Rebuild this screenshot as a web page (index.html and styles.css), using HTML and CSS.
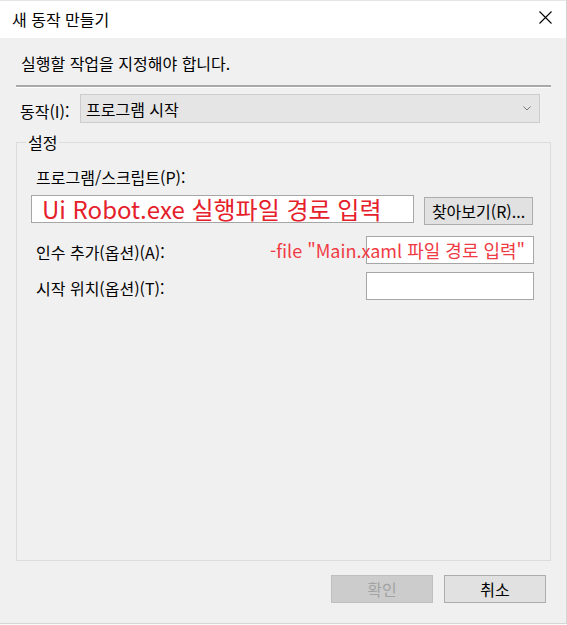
FILE: index.html
```html
<!DOCTYPE html>
<html lang="ko">
<head>
    <meta charset="UTF-8">
    <title>새 동작 만들기</title>
    <link rel="stylesheet" href="styles.css">
</head>
<body>
<div class="dialog">
    <div class="titlebar">
        <span class="title">새 동작 만들기</span>
        <svg class="close" width="13" height="13" viewBox="0 0 13 13">
            <path d="M0.5 0.5 L12.5 12.5 M12.5 0.5 L0.5 12.5" stroke="#000" stroke-width="1.1" fill="none"/>
        </svg>
    </div>
    <div class="content">
        <div class="intro">실행할 작업을 지정해야 합니다.</div>
        <div class="separator"></div>
        <div class="action-row">
            <span class="label">동작(I):</span>
            <div class="select">
                <span>프로그램 시작</span>
                <svg width="8" height="5" viewBox="0 0 8 5">
                    <path d="M0.5 0.5 L4 4 L7.5 0.5" stroke="#7a7a7a" stroke-width="1" fill="none"/>
                </svg>
            </div>
        </div>
        <fieldset class="settings">
            <legend>설정</legend>
            <div class="label indent">프로그램/스크립트(P):</div>
            <div class="program-row">
                <div class="textbox wide">Ui Robot.exe 실행파일 경로 입력</div>
                <button class="btn browse">찾아보기(R)...</button>
            </div>
            <div class="field-row args">
                <span class="label indent">인수 추가(옵션)(A):</span>
                <div class="textbox small"></div>
                <span class="note">-file "Main.xaml 파일 경로 입력"</span>
            </div>
            <div class="field-row">
                <span class="label indent">시작 위치(옵션)(T):</span>
                <div class="textbox small"></div>
            </div>
        </fieldset>
        <div class="buttons">
            <button class="btn dlg" disabled>확인</button>
            <button class="btn dlg">취소</button>
        </div>
    </div>
</div>
</body>
</html>
```
FILE: styles.css
```css
body { margin: 0; background: #fafafa; font-family: "Noto Sans CJK KR", "Noto Sans", sans-serif; font-size: 16px; color: #000; }
.dialog { width: 566px; height: 623px; background: #f0f0f0; border-right: 1px solid #d6d6d6; border-bottom: 1px solid #d6d6d6; display: flex; flex-direction: column; }
.titlebar { height: 37px; background: #fff; border-top: 1px solid #e6e6e6; display: flex; align-items: center; justify-content: space-between; padding: 0 14px 0 12px; flex-shrink: 0; }
.title { line-height: 20px; margin-top: -2px; }
.close { margin-top: -4px; }
.content { flex: 1; display: flex; flex-direction: column; padding: 15px 15px 20px 16px; }
.intro { line-height: 20px; padding-left: 5px; }
.separator { margin-top: 12px; border-top: 2px solid #a9a9a9; border-bottom: 1px solid #fff; }
.action-row { display: flex; align-items: center; margin-top: 6px; }
.label { line-height: 20px; }
.action-row .label { width: 64px; padding-left: 4px; box-sizing: border-box; padding-top: 4px; }
.select { width: 460px; height: 29px; box-sizing: border-box; background: #e5e5e5; border: 1px solid #cccccc; display: flex; align-items: center; justify-content: space-between; padding: 0 8px 0 5px; }
.settings { flex: 1; margin: 9px 0 0 0; padding: 15px 16px 0 14px; border: 1px solid #dcdcdc; min-width: 0; }
.settings legend { margin-left: -5px; padding: 0 2px; line-height: 20px; }
.indent { margin-left: 5px; }
.program-row { display: flex; align-items: flex-start; gap: 10px; margin-top: 8px; }
.textbox { background: #fff; border: 1px solid #a6a6a6; box-sizing: border-box; height: 28px; }
.wide { width: 383px; color: #e5202a; font-size: 24px; line-height: 25px; padding-left: 10px; white-space: nowrap; }
.small { width: 168px; }
.btn { font-family: inherit; font-size: 16px; color: #000; background: #e1e1e1; border: 1px solid #adadad; height: 28px; padding: 0; }
.browse { width: 109px; margin-top: 2px; }
.field-row { display: flex; align-items: center; justify-content: space-between; margin-top: 9px; position: relative; }
.field-row.args { margin-top: 11px; }
.field-row + .field-row { margin-top: 8px; }
.field-row .label { padding-top: 4px; }
.note { position: absolute; left: 239px; top: 0; line-height: 28px; font-size: 18px; color: #f03a44; white-space: nowrap; }
.buttons { display: flex; justify-content: flex-end; gap: 11px; margin-top: 14px; padding-right: 5px; }
.dlg { width: 102px; }
.dlg:disabled { background: #cccccc; border-color: #bfbfbf; color: #a3a3a3; }
```
